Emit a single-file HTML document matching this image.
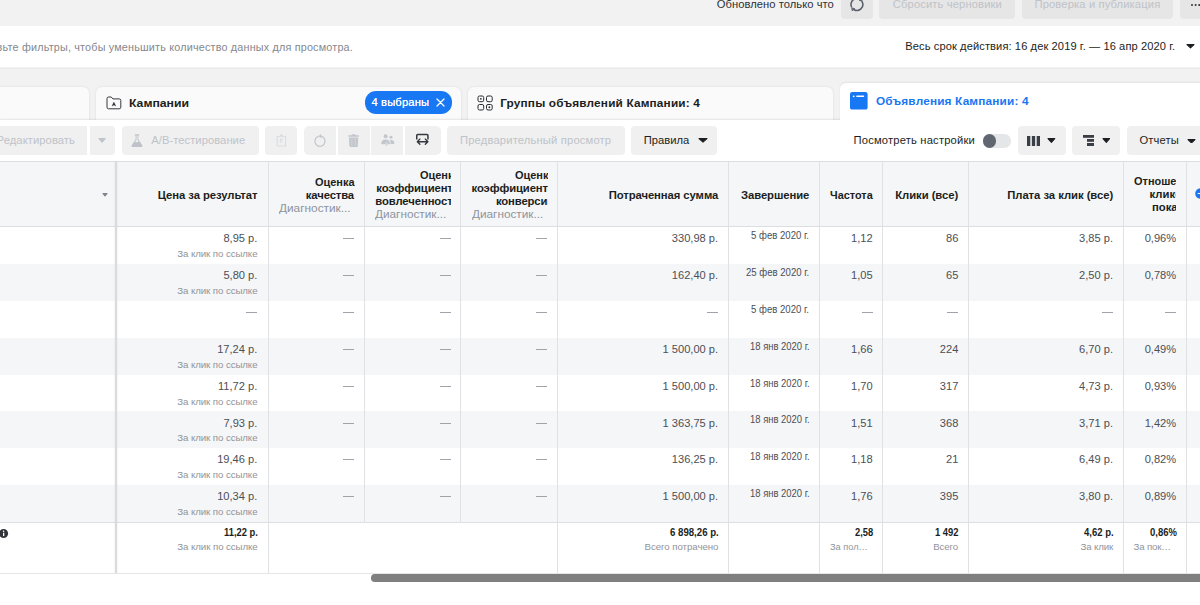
<!DOCTYPE html>
<html lang="ru"><head><meta charset="utf-8"><title>Ads Manager</title>
<style>
*{box-sizing:border-box;margin:0;padding:0}
html,body{width:1200px;height:605px;overflow:hidden;background:#fff}
body{font-family:"Liberation Sans",sans-serif;font-size:11px;color:#1c1e21;position:relative}
.abs{position:absolute;display:block}
.t{position:absolute;white-space:nowrap;display:block}
#top{left:0;top:0;width:1200px;height:26px;background:#f2f2f2}
#filter{left:0;top:26px;width:1200px;height:43px;background:linear-gradient(#fff 41px,#f3f3f3 41px,#f3f3f3 42px,#eaeaea 42px)}
#gap{left:0;top:69px;width:1200px;height:52px;background:#f2f2f2}
.btn{position:absolute;top:-10px;height:28.6px;background:#e6e6e6;border-radius:4px}
.tab{position:absolute;top:86.6px;height:34px;background:#fafafa;border-radius:6px 6px 0 0;box-shadow:0 0 2.5px rgba(0,0,0,.10)}
.tab.act{top:83.2px;height:39px;background:#fff;z-index:2;box-shadow:0 -1px 2px rgba(0,0,0,.07)}
#toolbar{left:0;top:120px;width:1200px;height:41px;background:#fff;box-shadow:0 -1px 1.5px rgba(0,0,0,.09)}
.tb{position:absolute;background:#f0f0f0}
#thead{left:0;top:161px;width:1200px;height:65.6px;background:#f5f6f7;border-top:1px solid #dcdee1;border-bottom:1px solid #dcdee1}
.row{position:absolute;left:0;width:1200px;background:#fff}
.row.alt{background:#f5f6f7}
.vl{position:absolute;display:block;width:1px;background:#dfe1e4}
.dash{position:absolute;display:block;width:11px;height:1.1px;background:#a0a4aa}
.clip{position:absolute;overflow:hidden}

</style></head><body>
<div id="top" class="abs"></div><div id="filter" class="abs"></div><div id="gap" class="abs"></div>
<span class="t" style="left:716.8px;top:-3px;font-size:11.2px;line-height:15px;color:#2e3035;letter-spacing:0.045px;">Обновлено только что</span>
<div class="btn" style="left:841px;width:32px"></div>
<div class="btn" style="left:879px;width:136px"></div>
<div class="btn" style="left:1021.5px;width:151.5px"></div>
<div class="btn" style="left:1180px;width:35px"></div>
<span class="t" style="left:892.8px;top:-3px;font-size:11.2px;line-height:15px;color:#bec3c9;letter-spacing:0.128px;">Сбросить черновики</span>
<span class="t" style="left:1034.5px;top:-3px;font-size:11.2px;line-height:15px;color:#bec3c9;letter-spacing:0.129px;">Проверка и публикация</span>
<svg class="abs" style="left:849px;top:-3px" width="16" height="16" viewBox="0 0 16 16" fill="none" stroke="#5a606a" stroke-width="1.55" stroke-linecap="round"><path d="M6.88 1.69A5.9 5.9 0 0 0 2.43 9.71"/><path d="M4.77 12.5A5.9 5.9 0 0 0 13.16 4.82"/><path d="M3.1 10.9L5.7 11.7L3.5 13.5Z M12.8 4.2L10.3 3.4L12.3 1.6Z" fill="#5a606a" stroke-width=".9" stroke-linejoin="round"/></svg>
<i class="abs" style="left:1190.5px;top:3.6px;width:2.4px;height:2.4px;border-radius:50%;background:#333;box-shadow:3.6px 0 0 #333,7.2px 0 0 #333"></i>
<span class="t" style="left:-3.4px;top:40px;font-size:10.8px;line-height:15px;color:#85888d;letter-spacing:0.187px;">вьте фильтры, чтобы уменьшить количество данных для просмотра.</span>
<span class="t" style="left:905.3px;top:39px;font-size:11.1px;line-height:15px;color:#1c1e21;letter-spacing:0.102px;">Весь срок действия: 16 дек 2019 г. — 16 апр 2020 г.</span>
<svg class="abs" style="left:1185.5px;top:44.3px" width="9.0" height="4.5" viewBox="0 0 9.0 4.5"><path d="M1 .6H8.00L4.50 3.80Z" fill="#1c1e21" stroke="#1c1e21" stroke-width="1.1" stroke-linejoin="round"/></svg>
<div class="tab" style="left:-10px;width:99px"></div>
<div class="tab" style="left:96px;width:364.7px"></div>
<div class="tab" style="left:468px;width:365.4px"></div>
<div class="tab act" style="left:840.2px;width:380px"></div>
<div id="toolbar" class="abs"></div>
<span class="t" style="left:128.7px;top:95px;font-size:11.8px;line-height:16px;color:#1c1e21;transform:scaleX(1.0351);transform-origin:0 0;font-weight:bold;">Кампании</span>
<span class="t" style="left:500.2px;top:95px;font-size:11.8px;line-height:16px;color:#1c1e21;letter-spacing:0.17px;font-weight:bold;">Группы объявлений Кампании: 4</span>
<span class="t" style="left:875.9px;top:93px;font-size:11.8px;line-height:16px;color:#1877f2;letter-spacing:0.173px;font-weight:bold;z-index:3;">Объявления Кампании: 4</span>
<svg class="abs" style="left:105.5px;top:95.5px" width="16" height="14" viewBox="0 0 16 14" fill="none" stroke="#2a2d31" stroke-width=".95" stroke-linejoin="round"><path d="M1 2.6A1.6 1.6 0 0 1 2.6 1H5.2L6.9 2.9H13.2A1.6 1.6 0 0 1 14.8 4.5V11.2A1.6 1.6 0 0 1 13.2 12.8H2.6A1.6 1.6 0 0 1 1 11.2Z"/><path d="M6 10.1L7.9 6.1L9.8 10.1L7.9 9.1Z" fill="#2a2d31" stroke-width=".3"/></svg>
<div class="abs" style="left:364.7px;top:91.4px;width:87.4px;height:22.2px;border-radius:11.1px;background:#1877f2"></div>
<span class="t" style="left:371.4px;top:95px;font-size:11.2px;line-height:15px;color:#fff;letter-spacing:0.159px;text-shadow:0 0 .5px #fff;">4 выбраны</span>
<svg class="abs" style="left:436px;top:98.3px" width="9" height="9" viewBox="0 0 9 9" stroke="#fff" stroke-width="1.3" stroke-linecap="round"><path d="M1 1L8 8M8 1L1 8"/></svg>
<svg class="abs" style="left:477.4px;top:94.7px" width="17" height="17" viewBox="0 0 17 17" fill="none" stroke="#2a2d31" stroke-width="1"><rect x="1" y="1" width="5.7" height="5.7" rx="1.5"/><rect x="9.5" y="1" width="5.7" height="5.7" rx="1.5"/><rect x="1" y="9.5" width="5.7" height="5.5" rx="1.5"/><rect x="9.5" y="9.5" width="5.7" height="5.5" rx="1.5"/><circle cx="3.85" cy="3.85" r=".9" fill="#2a2d31" stroke="none"/><circle cx="12.35" cy="12.25" r=".9" fill="#2a2d31" stroke="none"/></svg>
<svg class="abs" style="left:850.3px;top:92.3px;z-index:3" width="17.6" height="17.6" viewBox="0 0 17.6 17.6"><rect width="17.6" height="17.6" rx="2.2" fill="#1877f2"/><circle cx="3.7" cy="4.3" r=".9" fill="#fff"/><rect x="6.2" y="3.6" width="8" height="1.3" rx=".6" fill="#fff"/></svg>
<div class="tb" style="left:-20px;width:107.4px;top:126.3px;height:28.5px;border-radius:4px 0 0 4px"></div>
<div class="tb" style="left:89.5px;width:25.3px;top:126.3px;height:28.5px;border-radius:0 4px 4px 0"></div>
<div class="tb" style="left:121.5px;width:137.3px;top:126.3px;height:28.5px;border-radius:4px"></div>
<div class="tb" style="left:265.4px;width:31.6px;top:126.3px;height:28.5px;border-radius:4px"></div>
<div class="tb" style="left:304px;width:31.8px;top:126.3px;height:28.5px;border-radius:5px 0 0 5px"></div>
<div class="tb" style="left:337.8px;width:31.8px;top:126.3px;height:28.5px;border-radius:0"></div>
<div class="tb" style="left:371.4px;width:31.9px;top:126.3px;height:28.5px;border-radius:0"></div>
<div class="tb" style="left:405px;width:35.5px;top:126.3px;height:28.5px;border-radius:0 5px 5px 0"></div>
<div class="tb" style="left:447px;width:177.5px;top:126.3px;height:28.5px;border-radius:4px"></div>
<div class="tb" style="left:631.3px;width:85.7px;top:126.3px;height:28.5px;border-radius:4px"></div>
<div class="tb" style="left:1017.7px;width:47.9px;top:126.3px;height:28.5px;border-radius:4px"></div>
<div class="tb" style="left:1072.2px;width:48.2px;top:126.3px;height:28.5px;border-radius:4px"></div>
<div class="tb" style="left:1127px;width:88.0px;top:126.3px;height:28.5px;border-radius:4px"></div>
<span class="t" style="left:-3.4px;top:133px;font-size:11.2px;line-height:15px;color:#bec3c9;letter-spacing:0.083px;">Редактировать</span>
<svg class="abs" style="left:98px;top:138.1px" width="8.2" height="4.9" viewBox="0 0 8.2 4.9"><path d="M1 .6H7.20L4.10 4.20Z" fill="#c0c4cb" stroke="#c0c4cb" stroke-width="1.1" stroke-linejoin="round"/></svg>
<span class="t" style="left:151.2px;top:133px;font-size:11.2px;line-height:15px;color:#bec3c9;letter-spacing:0.059px;">A/B-тестирование</span>
<span class="t" style="left:460.0px;top:133px;font-size:11.2px;line-height:15px;color:#bec3c9;letter-spacing:0.169px;">Предварительный просмотр</span>
<span class="t" style="left:643.8px;top:133px;font-size:11.2px;line-height:15px;color:#1c1e21;letter-spacing:0.003px;">Правила</span>
<svg class="abs" style="left:697.5px;top:138.3px" width="10.0" height="4.8" viewBox="0 0 10.0 4.8"><path d="M1 .6H9.00L5.00 4.10Z" fill="#1c1e21" stroke="#1c1e21" stroke-width="1.1" stroke-linejoin="round"/></svg>
<span class="t" style="left:853.5px;top:133px;font-size:11.2px;line-height:15px;color:#1c1e21;letter-spacing:0.186px;">Посмотреть настройки</span>
<span class="t" style="left:1139.4px;top:133px;font-size:11.2px;line-height:15px;color:#1c1e21;letter-spacing:0.161px;">Отчеты</span>
<svg class="abs" style="left:1187.4px;top:138.5px" width="9.0" height="4.6" viewBox="0 0 9.0 4.6"><path d="M1 .6H8.00L4.50 3.90Z" fill="#1c1e21" stroke="#1c1e21" stroke-width="1.1" stroke-linejoin="round"/></svg>
<svg class="abs" style="left:1047px;top:138.2px" width="8.8" height="5.0" viewBox="0 0 8.8 5.0"><path d="M1 .6H7.80L4.40 4.30Z" fill="#1c1e21" stroke="#1c1e21" stroke-width="1.1" stroke-linejoin="round"/></svg>
<svg class="abs" style="left:1101.5px;top:138.2px" width="8.7" height="5.0" viewBox="0 0 8.7 5.0"><path d="M1 .6H7.70L4.35 4.30Z" fill="#1c1e21" stroke="#1c1e21" stroke-width="1.1" stroke-linejoin="round"/></svg>
<div class="abs" style="left:982.5px;top:134.4px;width:28.5px;height:13.2px;border-radius:6.6px;background:#e5e6e8"></div><div class="abs" style="left:982.5px;top:134.2px;width:13.6px;height:13.6px;border-radius:50%;background:#606770"></div>
<svg class="abs" style="left:1027px;top:135.5px" width="13" height="10" viewBox="0 0 13 10" fill="#3a3f47"><rect x="0" width="3.3" height="10"/><rect x="4.85" width="3.3" height="10"/><rect x="9.7" width="3.3" height="10"/></svg>
<svg class="abs" style="left:1082.5px;top:135px" width="11.4" height="11" viewBox="0 0 11.4 11" fill="#3a3f47"><rect x="0" y="0" width="11.4" height="2.8"/><rect x="4" y="4" width="7.4" height="2.8"/><rect x="4" y="8" width="7.4" height="3"/></svg>
<svg class="abs" style="left:131.4px;top:133.8px" width="12" height="13.4" viewBox="0 0 12 13.4"><path d="M3.9 .2H8.1V1.4H7.4V5.6L11.3 11.2A1.3 1.3 0 0 1 10.2 13.2H1.8A1.3 1.3 0 0 1 .7 11.2L4.6 5.6V1.4H3.9Z" fill="#bec3c9"/><path d="M5.5 1.4H6.5V5.9L7.9 7.9C6.9 7.5 6.3 8.6 5.3 8.3L4 8.1L5.5 5.9Z" fill="#f0f0f0"/></svg>
<svg class="abs" style="left:276px;top:133.4px" width="11" height="14" viewBox="0 0 11 14" fill="none" stroke="#d9dbdf" stroke-width="1.05" stroke-linejoin="round"><path d="M3.2 3.4H1.2V12.9H9.6V3.4H7.6"/><path d="M3.3 3.6L5.4 1L7.5 3.6Z" fill="#d9dbdf" stroke-width=".6"/><path d="M4.4 10V6.1H7M4.4 8H6.4" stroke-width=".9"/></svg>
<svg class="abs" style="left:313px;top:134px" width="14" height="14" viewBox="0 0 14 14" fill="none" stroke="#c2c6cd" stroke-width="1.25"><path d="M7.6 2.2A5.1 5.1 0 1 1 5.6 2.35"/><path d="M8.1 .5L5.5 2.2L8.1 3.6Z" fill="#c2c6cd" stroke-width=".5" stroke-linejoin="round"/></svg>
<svg class="abs" style="left:348px;top:134px" width="11.2" height="13.2" viewBox="0 0 11.2 13.2" fill="#c2c6cd"><path d="M4 .2H7.2L7.8 1.3H10.6A.5 .5 0 0 1 11 1.8V2.4A.4 .4 0 0 1 10.6 2.8H.6A.4 .4 0 0 1 .2 2.4V1.8A.5 .5 0 0 1 .6 1.3H3.4Z"/><path d="M1 3.5H10.2L9.8 11.8A1.3 1.3 0 0 1 8.5 13H2.7A1.3 1.3 0 0 1 1.4 11.8Z"/><path d="M3.9 4.6V11.8M7.3 4.6V11.8" stroke="#dfe1e4" stroke-width=".6"/></svg>
<svg class="abs" style="left:380.6px;top:134.4px" width="14" height="12.4" viewBox="0 0 14 12.4" fill="#c2c6cd"><circle cx="4.6" cy="2.3" r="2"/><circle cx="10" cy="3.3" r="1.5"/><path d="M.3 9.2C.3 7 2 5.5 4.6 5.5S8.9 7 8.9 9.2L8.6 10.2H.6Z"/><path d="M8.8 6.2C11.4 5.4 13.5 6.9 13.4 9.4L12.8 10.1H9.6C9.7 8.6 9.5 7.2 8.8 6.2Z"/><path d="M5.6 8.6V11.2M4.5 10.3L5.6 11.8L6.7 10.3" stroke="#f0f0f0" stroke-width="1.6" fill="none"/><path d="M5.6 8.8V11.4M4.7 10.5L5.6 11.7L6.5 10.5" stroke="#c2c6cd" stroke-width=".7" fill="none"/></svg>
<svg class="abs" style="left:415.4px;top:133.4px" width="15" height="13" viewBox="0 0 15 13" fill="none" stroke="#34383e" stroke-linejoin="round" stroke-linecap="round"><path d="M1.75 6.4V2.55A1 1 0 0 1 2.75 1.55H11.95A1 1 0 0 1 12.95 2.55V6.4" stroke-width="1.5" stroke-linecap="butt"/><path d="M2.8 8.7H12.4M4.9 6.1L2.3 8.7L4.9 11.3M10.3 6.1L12.9 8.7L10.3 11.3" stroke-width="1.35"/></svg>
<div id="thead" class="abs"></div>
<svg class="abs" style="left:102.3px;top:193.2px" width="6.0" height="3.5" viewBox="0 0 6.0 3.5"><path d="M1 .6H5.00L3.00 2.80Z" fill="#7f858e" stroke="#7f858e" stroke-width="1.1" stroke-linejoin="round"/></svg>
<span class="t" style="left:157.7px;top:187px;font-size:11.3px;line-height:16px;color:#1c1e21;letter-spacing:-0.07px;font-weight:bold;">Цена за результат</span>
<span class="t" style="left:314.5px;top:174px;font-size:11.3px;line-height:16px;color:#1c1e21;transform:scaleX(0.9709);transform-origin:0 0;font-weight:bold;">Оценка</span>
<span class="t" style="left:305.8px;top:187px;font-size:11.3px;line-height:16px;color:#1c1e21;letter-spacing:-0.127px;font-weight:bold;">качества</span>
<span class="t" style="left:278.5px;top:201px;font-size:11.2px;line-height:15px;color:#8d949e;transform:scaleX(1.0577);transform-origin:0 0;">Диагностик...</span>
<div class="clip" style="left:364.5px;top:162px;width:86.6px;height:64px">
<span class="t" style="left:55.7px;top:5px;font-size:11.3px;line-height:16px;color:#1c1e21;transform:scaleX(0.9709);transform-origin:0 0;font-weight:bold;">Оценка</span>
<span class="t" style="left:11.8px;top:18px;font-size:11.3px;line-height:16px;color:#1c1e21;letter-spacing:-0.117px;font-weight:bold;">коэффициента</span>
<span class="t" style="left:10.7px;top:31px;font-size:11.3px;line-height:16px;color:#1c1e21;letter-spacing:-0.092px;font-weight:bold;">вовлеченности</span>
<span class="t" style="left:10.7px;top:45px;font-size:11.2px;line-height:15px;color:#8d949e;transform:scaleX(1.0518);transform-origin:0 0;">Диагностик...</span>
</div>
<div class="clip" style="left:461px;top:162px;width:86.5px;height:64px">
<span class="t" style="left:53.5px;top:5px;font-size:11.3px;line-height:16px;color:#1c1e21;transform:scaleX(0.9709);transform-origin:0 0;font-weight:bold;">Оценка</span>
<span class="t" style="left:10.5px;top:18px;font-size:11.3px;line-height:16px;color:#1c1e21;letter-spacing:-0.117px;font-weight:bold;">коэффициента</span>
<span class="t" style="left:35.0px;top:31px;font-size:11.3px;line-height:16px;color:#1c1e21;letter-spacing:-0.153px;font-weight:bold;">конверсии</span>
<span class="t" style="left:10.5px;top:45px;font-size:11.2px;line-height:15px;color:#8d949e;transform:scaleX(1.0518);transform-origin:0 0;">Диагностик...</span>
</div>
<span class="t" style="left:608.7px;top:187px;font-size:11.3px;line-height:16px;color:#1c1e21;letter-spacing:-0.083px;font-weight:bold;">Потраченная сумма</span>
<span class="t" style="left:741.0px;top:187px;font-size:11.3px;line-height:16px;color:#1c1e21;letter-spacing:-0.085px;font-weight:bold;">Завершение</span>
<span class="t" style="left:830.3px;top:187px;font-size:11.3px;line-height:16px;color:#1c1e21;transform:scaleX(0.9631);transform-origin:0 0;font-weight:bold;">Частота</span>
<span class="t" style="left:895.2px;top:187px;font-size:11.3px;line-height:16px;color:#1c1e21;letter-spacing:-0.05px;font-weight:bold;">Клики (все)</span>
<span class="t" style="left:1007.2px;top:187px;font-size:11.3px;line-height:16px;color:#1c1e21;letter-spacing:-0.049px;font-weight:bold;">Плата за клик (все)</span>
<div class="clip" style="left:1124px;top:162px;width:52.4px;height:64px">
<span class="t" style="left:9.6px;top:11px;font-size:11.3px;line-height:16px;color:#1c1e21;transform:scaleX(0.9701);transform-origin:0 0;font-weight:bold;">Отношение</span>
<span class="t" style="left:25.5px;top:24px;font-size:11.3px;line-height:16px;color:#1c1e21;letter-spacing:0.057px;font-weight:bold;">кликов к</span>
<span class="t" style="left:27.9px;top:37px;font-size:11.3px;line-height:16px;color:#1c1e21;letter-spacing:0.028px;font-weight:bold;">показам</span>
</div>
<svg class="abs" style="left:1195px;top:187.5px" width="6" height="11" viewBox="0 0 6 11"><circle cx="5.6" cy="5.5" r="5.4" fill="#1877f2"/><path d="M2.6 5.5H6M5.6 2.6V8.4" stroke="#fff" stroke-width="1.2"/></svg>
<div id="table">
<div class="row" style="top:227.00px;height:37.17px"></div>
<span class="t" style="left:223.4px;top:231px;font-size:11.1px;line-height:15px;color:#4b4f56;letter-spacing:0.0px;">8,95 р.</span>
<span class="t" style="left:177.2px;top:247px;font-size:9.7px;line-height:14px;color:#90949c;letter-spacing:-0.081px;">За клик по ссылке</span>
<i class="dash" style="left:343.3px;top:238.2px"></i>
<i class="dash" style="left:440.0px;top:238.2px"></i>
<i class="dash" style="left:536.4px;top:238.2px"></i>
<span class="t" style="left:671.8px;top:231px;font-size:11.1px;line-height:15px;color:#4b4f56;letter-spacing:-0.0px;">330,98 р.</span>
<span class="t" style="left:751.2px;top:229px;font-size:10.4px;line-height:14px;color:#4b4f56;transform:scaleX(0.9226);transform-origin:0 0;">5 фев 2020 г.</span>
<span class="t" style="left:851.0px;top:231px;font-size:11.1px;line-height:15px;color:#4b4f56;letter-spacing:-0.0px;">1,12</span>
<span class="t" style="left:946.0px;top:231px;font-size:11.1px;line-height:15px;color:#4b4f56;letter-spacing:0.0px;">86</span>
<span class="t" style="left:1079.1px;top:231px;font-size:11.1px;line-height:15px;color:#4b4f56;letter-spacing:-0.0px;">3,85 р.</span>
<span class="t" style="left:1144.7px;top:231px;font-size:11.1px;line-height:15px;color:#4b4f56;letter-spacing:0.0px;">0,96%</span>
<div class="row alt" style="top:263.88px;height:37.17px"></div>
<span class="t" style="left:223.4px;top:268px;font-size:11.1px;line-height:15px;color:#4b4f56;letter-spacing:0.0px;">5,80 р.</span>
<span class="t" style="left:177.2px;top:284px;font-size:9.7px;line-height:14px;color:#90949c;letter-spacing:-0.081px;">За клик по ссылке</span>
<i class="dash" style="left:343.3px;top:275.1px"></i>
<i class="dash" style="left:440.0px;top:275.1px"></i>
<i class="dash" style="left:536.4px;top:275.1px"></i>
<span class="t" style="left:671.8px;top:268px;font-size:11.1px;line-height:15px;color:#4b4f56;letter-spacing:-0.0px;">162,40 р.</span>
<span class="t" style="left:745.9px;top:266px;font-size:10.4px;line-height:14px;color:#4b4f56;transform:scaleX(0.9220);transform-origin:0 0;">25 фев 2020 г.</span>
<span class="t" style="left:851.0px;top:268px;font-size:11.1px;line-height:15px;color:#4b4f56;letter-spacing:-0.0px;">1,05</span>
<span class="t" style="left:946.0px;top:268px;font-size:11.1px;line-height:15px;color:#4b4f56;letter-spacing:0.0px;">65</span>
<span class="t" style="left:1079.1px;top:268px;font-size:11.1px;line-height:15px;color:#4b4f56;letter-spacing:-0.0px;">2,50 р.</span>
<span class="t" style="left:1144.7px;top:268px;font-size:11.1px;line-height:15px;color:#4b4f56;letter-spacing:0.0px;">0,78%</span>
<div class="row" style="top:300.75px;height:37.17px"></div>
<i class="dash" style="left:246.3px;top:311.9px"></i>
<i class="dash" style="left:343.3px;top:311.9px"></i>
<i class="dash" style="left:440.0px;top:311.9px"></i>
<i class="dash" style="left:536.4px;top:311.9px"></i>
<i class="dash" style="left:707.1px;top:311.9px"></i>
<span class="t" style="left:751.2px;top:303px;font-size:10.4px;line-height:14px;color:#4b4f56;transform:scaleX(0.9226);transform-origin:0 0;">5 фев 2020 г.</span>
<i class="dash" style="left:861.6px;top:311.9px"></i>
<i class="dash" style="left:947.3px;top:311.9px"></i>
<i class="dash" style="left:1102.0px;top:311.9px"></i>
<i class="dash" style="left:1165.2px;top:311.9px"></i>
<div class="row alt" style="top:337.62px;height:37.17px"></div>
<span class="t" style="left:217.2px;top:342px;font-size:11.1px;line-height:15px;color:#4b4f56;letter-spacing:0.0px;">17,24 р.</span>
<span class="t" style="left:177.2px;top:358px;font-size:9.7px;line-height:14px;color:#90949c;letter-spacing:-0.081px;">За клик по ссылке</span>
<i class="dash" style="left:343.3px;top:348.8px"></i>
<i class="dash" style="left:440.0px;top:348.8px"></i>
<i class="dash" style="left:536.4px;top:348.8px"></i>
<span class="t" style="left:662.6px;top:342px;font-size:11.1px;line-height:15px;color:#4b4f56;letter-spacing:0.0px;">1 500,00 р.</span>
<span class="t" style="left:749.5px;top:340px;font-size:10.4px;line-height:14px;color:#4b4f56;transform:scaleX(0.9089);transform-origin:0 0;">18 янв 2020 г.</span>
<span class="t" style="left:851.0px;top:342px;font-size:11.1px;line-height:15px;color:#4b4f56;letter-spacing:-0.0px;">1,66</span>
<span class="t" style="left:939.8px;top:342px;font-size:11.1px;line-height:15px;color:#4b4f56;letter-spacing:0.0px;">224</span>
<span class="t" style="left:1079.1px;top:342px;font-size:11.1px;line-height:15px;color:#4b4f56;letter-spacing:-0.0px;">6,70 р.</span>
<span class="t" style="left:1144.7px;top:342px;font-size:11.1px;line-height:15px;color:#4b4f56;letter-spacing:0.0px;">0,49%</span>
<div class="row" style="top:374.50px;height:37.17px"></div>
<span class="t" style="left:218.0px;top:379px;font-size:11.1px;line-height:15px;color:#4b4f56;letter-spacing:0.0px;">11,72 р.</span>
<span class="t" style="left:177.2px;top:395px;font-size:9.7px;line-height:14px;color:#90949c;letter-spacing:-0.081px;">За клик по ссылке</span>
<i class="dash" style="left:343.3px;top:385.7px"></i>
<i class="dash" style="left:440.0px;top:385.7px"></i>
<i class="dash" style="left:536.4px;top:385.7px"></i>
<span class="t" style="left:662.6px;top:379px;font-size:11.1px;line-height:15px;color:#4b4f56;letter-spacing:0.0px;">1 500,00 р.</span>
<span class="t" style="left:749.5px;top:377px;font-size:10.4px;line-height:14px;color:#4b4f56;transform:scaleX(0.9089);transform-origin:0 0;">18 янв 2020 г.</span>
<span class="t" style="left:851.0px;top:379px;font-size:11.1px;line-height:15px;color:#4b4f56;letter-spacing:-0.0px;">1,70</span>
<span class="t" style="left:939.8px;top:379px;font-size:11.1px;line-height:15px;color:#4b4f56;letter-spacing:0.0px;">317</span>
<span class="t" style="left:1079.1px;top:379px;font-size:11.1px;line-height:15px;color:#4b4f56;letter-spacing:-0.0px;">4,73 р.</span>
<span class="t" style="left:1144.7px;top:379px;font-size:11.1px;line-height:15px;color:#4b4f56;letter-spacing:0.0px;">0,93%</span>
<div class="row alt" style="top:411.38px;height:37.17px"></div>
<span class="t" style="left:223.4px;top:416px;font-size:11.1px;line-height:15px;color:#4b4f56;letter-spacing:0.0px;">7,93 р.</span>
<span class="t" style="left:177.2px;top:431px;font-size:9.7px;line-height:14px;color:#90949c;letter-spacing:-0.081px;">За клик по ссылке</span>
<i class="dash" style="left:343.3px;top:422.6px"></i>
<i class="dash" style="left:440.0px;top:422.6px"></i>
<i class="dash" style="left:536.4px;top:422.6px"></i>
<span class="t" style="left:662.6px;top:416px;font-size:11.1px;line-height:15px;color:#4b4f56;letter-spacing:0.0px;">1 363,75 р.</span>
<span class="t" style="left:749.5px;top:413px;font-size:10.4px;line-height:14px;color:#4b4f56;transform:scaleX(0.9089);transform-origin:0 0;">18 янв 2020 г.</span>
<span class="t" style="left:851.0px;top:416px;font-size:11.1px;line-height:15px;color:#4b4f56;letter-spacing:-0.0px;">1,51</span>
<span class="t" style="left:939.8px;top:416px;font-size:11.1px;line-height:15px;color:#4b4f56;letter-spacing:0.0px;">368</span>
<span class="t" style="left:1079.1px;top:416px;font-size:11.1px;line-height:15px;color:#4b4f56;letter-spacing:-0.0px;">3,71 р.</span>
<span class="t" style="left:1144.7px;top:416px;font-size:11.1px;line-height:15px;color:#4b4f56;letter-spacing:0.0px;">1,42%</span>
<div class="row" style="top:448.25px;height:37.17px"></div>
<span class="t" style="left:217.2px;top:452px;font-size:11.1px;line-height:15px;color:#4b4f56;letter-spacing:0.0px;">19,46 р.</span>
<span class="t" style="left:177.2px;top:468px;font-size:9.7px;line-height:14px;color:#90949c;letter-spacing:-0.081px;">За клик по ссылке</span>
<i class="dash" style="left:343.3px;top:459.4px"></i>
<i class="dash" style="left:440.0px;top:459.4px"></i>
<i class="dash" style="left:536.4px;top:459.4px"></i>
<span class="t" style="left:671.8px;top:452px;font-size:11.1px;line-height:15px;color:#4b4f56;letter-spacing:-0.0px;">136,25 р.</span>
<span class="t" style="left:749.5px;top:450px;font-size:10.4px;line-height:14px;color:#4b4f56;transform:scaleX(0.9089);transform-origin:0 0;">18 янв 2020 г.</span>
<span class="t" style="left:851.0px;top:452px;font-size:11.1px;line-height:15px;color:#4b4f56;letter-spacing:-0.0px;">1,18</span>
<span class="t" style="left:946.0px;top:452px;font-size:11.1px;line-height:15px;color:#4b4f56;letter-spacing:0.0px;">21</span>
<span class="t" style="left:1079.1px;top:452px;font-size:11.1px;line-height:15px;color:#4b4f56;letter-spacing:-0.0px;">6,49 р.</span>
<span class="t" style="left:1144.7px;top:452px;font-size:11.1px;line-height:15px;color:#4b4f56;letter-spacing:0.0px;">0,82%</span>
<div class="row alt" style="top:485.12px;height:37.17px"></div>
<span class="t" style="left:217.2px;top:489px;font-size:11.1px;line-height:15px;color:#4b4f56;letter-spacing:0.0px;">10,34 р.</span>
<span class="t" style="left:177.2px;top:505px;font-size:9.7px;line-height:14px;color:#90949c;letter-spacing:-0.081px;">За клик по ссылке</span>
<i class="dash" style="left:343.3px;top:496.3px"></i>
<i class="dash" style="left:440.0px;top:496.3px"></i>
<i class="dash" style="left:536.4px;top:496.3px"></i>
<span class="t" style="left:662.6px;top:489px;font-size:11.1px;line-height:15px;color:#4b4f56;letter-spacing:0.0px;">1 500,00 р.</span>
<span class="t" style="left:749.5px;top:487px;font-size:10.4px;line-height:14px;color:#4b4f56;transform:scaleX(0.9089);transform-origin:0 0;">18 янв 2020 г.</span>
<span class="t" style="left:851.0px;top:489px;font-size:11.1px;line-height:15px;color:#4b4f56;letter-spacing:-0.0px;">1,76</span>
<span class="t" style="left:939.8px;top:489px;font-size:11.1px;line-height:15px;color:#4b4f56;letter-spacing:0.0px;">395</span>
<span class="t" style="left:1079.1px;top:489px;font-size:11.1px;line-height:15px;color:#4b4f56;letter-spacing:-0.0px;">3,80 р.</span>
<span class="t" style="left:1144.7px;top:489px;font-size:11.1px;line-height:15px;color:#4b4f56;letter-spacing:0.0px;">0,89%</span>
</div>
<div class="abs" style="left:0;top:522px;width:1200px;height:51.6px;background:#fff;border-top:1px solid #dddfe2;border-bottom:1px solid #e4e6e8"></div>
<i class="vl" style="left:268px;top:162px;height:411px"></i>
<i class="vl" style="left:364px;top:162px;height:361px"></i>
<i class="vl" style="left:460px;top:162px;height:361px"></i>
<i class="vl" style="left:557px;top:162px;height:411px"></i>
<i class="vl" style="left:728px;top:162px;height:411px"></i>
<i class="vl" style="left:819px;top:162px;height:411px"></i>
<i class="vl" style="left:882px;top:162px;height:411px"></i>
<i class="vl" style="left:968px;top:162px;height:411px"></i>
<i class="vl" style="left:1123px;top:162px;height:411px"></i>
<i class="vl" style="left:1186px;top:162px;height:411px"></i>
<i class="vl" style="left:114.8px;top:162px;height:411px;width:2px;background:#d9dbde;box-shadow:0 0 2px rgba(0,0,0,.10)"></i>
<svg class="abs" style="left:-1px;top:529px" width="10" height="9" viewBox="0 0 10 9"><circle cx="4.6" cy="4.5" r="4.5" fill="#303338"/><rect x="4" y="3.7" width="1.3" height="3.4" fill="#fff"/><circle cx="4.6" cy="2.3" r=".8" fill="#fff"/></svg>
<span class="t" style="left:224.0px;top:526px;font-size:10.4px;line-height:14px;color:#1c1e21;transform:scaleX(0.8993);transform-origin:0 0;font-weight:bold;">11,22 р.</span>
<span class="t" style="left:177.3px;top:540px;font-size:9.7px;line-height:14px;color:#90949c;letter-spacing:-0.075px;">За клик по ссылке</span>
<span class="t" style="left:669.7px;top:526px;font-size:10.4px;line-height:14px;color:#1c1e21;transform:scaleX(0.9275);transform-origin:0 0;font-weight:bold;">6 898,26 р.</span>
<span class="t" style="left:644.5px;top:540px;font-size:9.7px;line-height:14px;color:#90949c;letter-spacing:-0.054px;">Всего потрачено</span>
<span class="t" style="left:854.5px;top:526px;font-size:10.4px;line-height:14px;color:#1c1e21;transform:scaleX(0.8991);transform-origin:0 0;font-weight:bold;">2,58</span>
<span class="t" style="left:830.0px;top:540px;font-size:9.7px;line-height:14px;color:#90949c;transform:scaleX(0.9511);transform-origin:0 0;">За пол…</span>
<span class="t" style="left:934.5px;top:526px;font-size:10.4px;line-height:14px;color:#1c1e21;transform:scaleX(0.9068);transform-origin:0 0;font-weight:bold;">1 492</span>
<span class="t" style="left:933.3px;top:540px;font-size:9.7px;line-height:14px;color:#90949c;letter-spacing:-0.141px;">Всего</span>
<span class="t" style="left:1083.5px;top:526px;font-size:10.4px;line-height:14px;color:#1c1e21;transform:scaleX(0.9174);transform-origin:0 0;font-weight:bold;">4,62 р.</span>
<span class="t" style="left:1080.5px;top:540px;font-size:9.7px;line-height:14px;color:#90949c;letter-spacing:-0.142px;">За клик</span>
<span class="t" style="left:1149.5px;top:526px;font-size:10.4px;line-height:14px;color:#1c1e21;transform:scaleX(0.9122);transform-origin:0 0;font-weight:bold;">0,86%</span>
<span class="t" style="left:1133.5px;top:540px;font-size:9.7px;line-height:14px;color:#90949c;letter-spacing:-0.16px;">За пок…</span>
<div class="abs" style="left:371px;top:574.3px;width:850px;height:7.5px;border-radius:3.8px;background:#7f7f7f"></div>
</body></html>
